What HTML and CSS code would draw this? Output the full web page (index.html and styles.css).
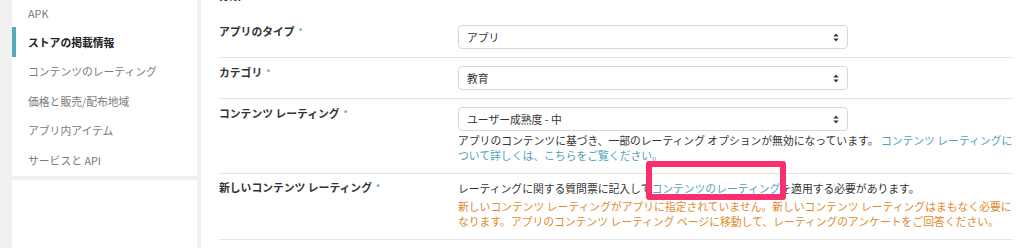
FILE: index.html
```html
<!DOCTYPE html>
<html lang="ja">
<head>
<meta charset="utf-8">
<link rel="stylesheet" href="styles.css">
</head>
<body>
<div class="page">
  <aside class="side">
    <nav class="nav">
      <div class="nav-item">APK</div>
      <div class="nav-item active">ストアの掲載情報</div>
      <div class="nav-item">コンテンツのレーティング</div>
      <div class="nav-item">価格と販売/配布地域</div>
      <div class="nav-item">アプリ内アイテム</div>
      <div class="nav-item">サービスと API</div>
    </nav>
    <div class="side-lower"></div>
  </aside>
  <main class="main">
    <div class="head-cut">分類</div>
    <div class="row first">
      <div class="label">アプリのタイプ<span class="req">*</span></div>
      <div class="field">
        <div class="select"><span>アプリ</span><svg class="arr" width="6" height="9" viewBox="0 0 6 9"><path d="M3 0.5L5.6 3.6H0.4Z M3 8.5L5.6 5.4H0.4Z" fill="#333"/></svg></div>
      </div>
    </div>
    <div class="row">
      <div class="label">カテゴリ<span class="req">*</span></div>
      <div class="field">
        <div class="select"><span>教育</span><svg class="arr" width="6" height="9" viewBox="0 0 6 9"><path d="M3 0.5L5.6 3.6H0.4Z M3 8.5L5.6 5.4H0.4Z" fill="#333"/></svg></div>
      </div>
    </div>
    <div class="row">
      <div class="label">コンテンツ レーティング<span class="req">*</span></div>
      <div class="field">
        <div class="select"><span>ユーザー成熟度 - 中</span><svg class="arr" width="6" height="9" viewBox="0 0 6 9"><path d="M3 0.5L5.6 3.6H0.4Z M3 8.5L5.6 5.4H0.4Z" fill="#333"/></svg></div>
        <p class="help">アプリのコンテンツに基づき、一部のレーティング オプションが無効になっています。 <a class="link">コンテンツ レーティングに<br>ついて詳しくは、こちらをご覧ください。</a></p>
      </div>
    </div>
    <div class="row last">
      <div class="label">新しいコンテンツ レーティング<span class="req">*</span></div>
      <div class="field">
        <p class="text">レーティングに関する質問票に記入して<a class="link hl">コンテンツのレーティング<span class="mark"></span></a>を適用する必要があります。</p>
        <p class="warn">新しいコンテンツ レーティングがアプリに指定されていません。新しいコンテンツ レーティングはまもなく必要に<br>なります。アプリのコンテンツ レーティング ページに移動して、レーティングのアンケートをご回答ください。</p>
      </div>
    </div>
  </main>
</div>
</body>
</html>
```

FILE: styles.css
```css
* { box-sizing: border-box; }
html, body { margin: 0; padding: 0; }
body {
  background: #f1f1f1;
  font-family: "Noto Sans CJK JP", "Noto Sans", sans-serif;
  font-size: 10.8px;
  color: #333;
  height: 248px;
  overflow: hidden;
}
.page {
  display: flex;
  height: 248px;
  padding-left: 12px;
  gap: 4px;
}
.side {
  width: 185px;
  display: flex;
  flex-direction: column;
  gap: 4px;
}
.nav {
  background: #fff;
  margin-top: -2px;
  padding-bottom: 1.5px;
}
.nav-item {
  height: 29.4px;
  display: flex;
  align-items: center;
  padding-left: 12px;
  color: #7a7a7a;
  border-left: 4px solid transparent;
}
.nav-item.active {
  border-left-color: #5aaab9;
  color: #222;
  font-weight: bold;
}
.side-lower {
  flex: 1;
  background: #fff;
}
.main {
  flex: 1;
  background: #fff;
  padding: 0 11px 0 18px;
}
.head-cut {
  height: 15px;
  line-height: 15px;
  margin-top: -12px;
  font-weight: bold;
  color: #333;
}
.row {
  display: flex;
  padding: 8px 0;
  border-bottom: 1px solid #e4e4e4;
}
.row.first { margin-top: 14px; }
.row:nth-of-type(4) { padding-bottom: 10px; }
.row.last { padding: 7px 0 10px; }
.label {
  width: 239px;
  flex: none;
  font-weight: bold;
  line-height: 11px;
  color: #333;
}
.req {
  color: #5aaab9;
  font-size: 8px;
  margin-left: 4px;
  vertical-align: 2px;
  font-weight: bold;
}
.field { flex: 1; }
.select {
  width: 390px;
  height: 24px;
  border: 1px solid #d8d8d8;
  border-radius: 4px;
  display: flex;
  align-items: center;
  justify-content: space-between;
  padding: 0 8px 0 8px;
  color: #333;
}
.arr { display: block; }
.help, .text, .warn {
  margin: 0;
  line-height: 15px;
}
.help { margin-top: 2px; color: #333; }
.link { color: #4ea3bb; }
.warn { margin-top: 3px; color: #e08a2c; }
.hl { position: relative; }
.mark {
  position: absolute;
  left: -5px;
  top: -19px;
  width: 140px;
  height: 39px;
  border: 6px solid #fa2f6d;
  border-radius: 3px;
}
```
